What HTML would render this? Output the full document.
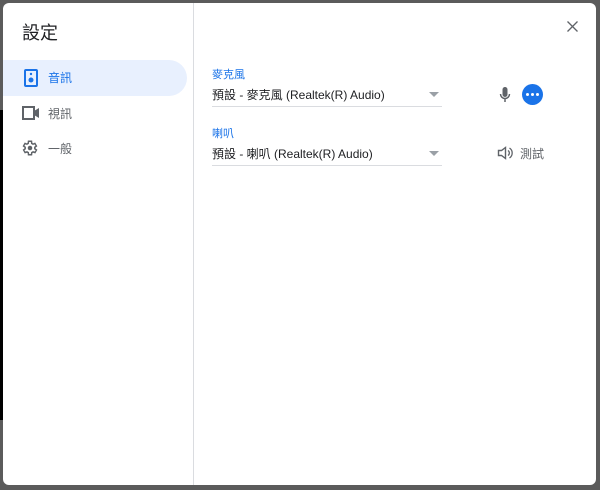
<!DOCTYPE html>
<html><head><meta charset="utf-8"><style>
html,body{margin:0;padding:0;width:600px;height:490px;overflow:hidden;background:#5b5b5b;font-family:"Liberation Sans","Noto Sans CJK TC",sans-serif;}
.blk{position:absolute;left:0;top:110px;width:4px;height:310px;background:#000;}
.rs{position:absolute;left:596px;top:0;width:4px;height:490px;background:#5b5b5b;}
.dlg{position:absolute;left:3px;top:3px;width:593px;height:482px;background:#fff;border-radius:6px;overflow:hidden;}
.div{position:absolute;left:190px;top:0;width:1px;height:482px;background:#dadce0;}
.t{position:absolute;left:19px;top:16px;font-size:18px;color:#202124;}
.sel{position:absolute;left:0;top:57px;width:184px;height:36px;background:#e8f0fe;border-radius:0 18px 18px 0;}
.ni{position:absolute;left:45px;font-size:12px;color:#5f6368;}
.ic{position:absolute;}
.lab{position:absolute;left:209px;font-size:11px;color:#1a73e8;}
.val{position:absolute;left:209px;font-size:12px;color:#202124;}
.ul{position:absolute;left:209px;width:230px;height:1px;background:#dadce0;}
.arr{position:absolute;left:426px;width:0;height:0;border-left:5px solid transparent;border-right:5px solid transparent;border-top:5px solid #9aa0a6;}
</style></head><body>
<div class="blk"></div>
<div class="dlg">
<div class="div"></div>
<div class="t">設定</div>
<div class="sel"></div>
<svg class="ic" style="left:20px;top:66px" width="16" height="18" viewBox="0 0 16 18"><rect x="2" y="1" width="12" height="16" rx="1" fill="none" stroke="#1a73e8" stroke-width="2"/><circle cx="8" cy="11" r="2.5" fill="#1a73e8"/><circle cx="8" cy="5" r="1.2" fill="#1a73e8"/></svg>
<div class="ni" style="top:66px;color:#1a73e8">音訊</div>
<svg class="ic" style="left:19px;top:103px" width="18" height="14" viewBox="0 0 18 14"><rect x="1" y="1" width="11" height="12" fill="none" stroke="#5f6368" stroke-width="2"/><path d="M12 5 L17 2 V12 L12 9Z" fill="#5f6368"/></svg>
<div class="ni" style="top:102px">視訊</div>
<svg class="ic" style="left:18px;top:136px" width="18" height="18" viewBox="0 0 24 24"><path fill="none" stroke="#5f6368" stroke-width="2" d="M19.4 13a7.5 7.5 0 0 0 0-2l2.1-1.6-2-3.5-2.5 1a7 7 0 0 0-1.7-1L15 3h-4l-.4 2.9a7 7 0 0 0-1.7 1l-2.5-1-2 3.5L6.6 11a7.5 7.5 0 0 0 0 2l-2.1 1.6 2 3.5 2.5-1a7 7 0 0 0 1.7 1L11 21h4l.4-2.9a7 7 0 0 0 1.7-1l2.5 1 2-3.5z" transform="translate(-1 0)"/><circle cx="12" cy="12" r="3" fill="#5f6368"/></svg>
<div class="ni" style="top:137px">一般</div>
<svg class="ic" style="left:564px;top:18px" width="11" height="11" viewBox="0 0 11 11"><path d="M0.5 0.5L10.5 10.5M10.5 0.5L0.5 10.5" stroke="#5f6368" stroke-width="1.3"/></svg>

<div class="lab" style="top:63px">麥克風</div>
<div class="val" style="top:83px">預設 - 麥克風 (Realtek(R) Audio)</div>
<div class="arr" style="top:89px"></div>
<div class="ul" style="top:103px"></div>
<svg class="ic" style="left:496px;top:83px" width="12" height="18" viewBox="0 0 12 18"><rect x="3.5" y="1" width="5" height="10" rx="2.5" fill="#5f6368"/><path d="M1.5 8a4.5 4.5 0 0 0 9 0M6 12.5V16" stroke="#5f6368" stroke-width="1.5" fill="none"/></svg>
<div class="ic" style="left:519px;top:81px;width:21px;height:21px;border-radius:50%;background:#1a73e8"></div>
<div class="ic" style="left:523px;top:90px;width:3px;height:3px;border-radius:50%;background:#fff"></div>
<div class="ic" style="left:528px;top:90px;width:3px;height:3px;border-radius:50%;background:#fff"></div>
<div class="ic" style="left:533px;top:90px;width:3px;height:3px;border-radius:50%;background:#fff"></div>

<div class="lab" style="top:122px">喇叭</div>
<div class="val" style="top:142px">預設 - 喇叭 (Realtek(R) Audio)</div>
<div class="arr" style="top:148px"></div>
<div class="ul" style="top:162px"></div>
<svg class="ic" style="left:494px;top:143px" width="16" height="14" viewBox="0 0 16 14"><path d="M1.5 4.5h3l4-3v11l-4-3h-3z" fill="none" stroke="#5f6368" stroke-width="1.4"/><path d="M11 4.5a3 3 0 0 1 0 5M12.5 2a6 6 0 0 1 0 10" stroke="#5f6368" stroke-width="1.3" fill="none"/></svg>
<div class="ni" style="left:517px;top:142px">測試</div>
</div>
<div class="rs"></div>
</body></html>
